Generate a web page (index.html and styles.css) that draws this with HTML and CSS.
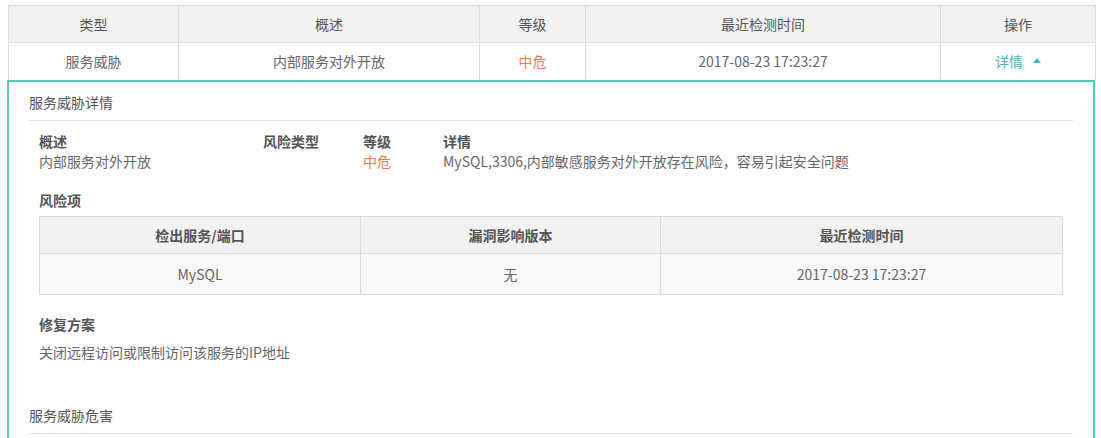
FILE: index.html
```html
<!DOCTYPE html>
<html lang="zh-CN">
<head>
<meta charset="utf-8">
<link rel="stylesheet" href="styles.css">
</head>
<body>
<div class="page">
  <table class="main-table">
    <colgroup>
      <col class="c1"><col class="c2"><col class="c3"><col class="c4"><col class="c5">
    </colgroup>
    <thead>
      <tr><th>类型</th><th>概述</th><th>等级</th><th>最近检测时间</th><th>操作</th></tr>
    </thead>
    <tbody>
      <tr>
        <td>服务威胁</td>
        <td>内部服务对外开放</td>
        <td class="level">中危</td>
        <td>2017-08-23 17:23:27</td>
        <td><span class="link">详情<span class="caret"></span></span></td>
      </tr>
    </tbody>
  </table>
  <div class="detail">
    <div class="section-title">服务威胁详情</div>
    <div class="section-body">
      <div class="info">
        <div class="label">概述</div>
        <div class="label">风险类型</div>
        <div class="label">等级</div>
        <div class="label">详情</div>
        <div class="value">内部服务对外开放</div>
        <div class="value"></div>
        <div class="value level">中危</div>
        <div class="value">MySQL,3306,内部敏感服务对外开放存在风险，容易引起安全问题</div>
      </div>
      <div class="label sub-head">风险项</div>
      <table class="risk-table">
        <colgroup><col class="r1"><col class="r2"><col class="r3"></colgroup>
        <thead><tr><th>检出服务/端口</th><th>漏洞影响版本</th><th>最近检测时间</th></tr></thead>
        <tbody><tr><td>MySQL</td><td>无</td><td>2017-08-23 17:23:27</td></tr></tbody>
      </table>
      <div class="label fix-head">修复方案</div>
      <div class="fix-text">关闭远程访问或限制访问该服务的IP地址</div>
    </div>
    <div class="section-title second">服务威胁危害</div>
  </div>
</div>
</body>
</html>
```
FILE: styles.css
```css
* { box-sizing: border-box; }
html, body { margin: 0; padding: 0; background: #fff; }
body {
  font-family: "Noto Sans CJK SC", "Noto Sans", sans-serif;
  font-size: 14px;
  color: #666;
}
.page { padding: 5px 6px 0 7px; }
.main-table {
  border-collapse: collapse;
  table-layout: fixed;
  margin-left: 1px;
  width: 1087px;
}
.c1 { width: 170px; } .c2 { width: 301px; } .c3 { width: 106px; } .c4 { width: 355px; } .c5 { width: 155px; }
.main-table th, .main-table td {
  border: 1px solid #dcdcdc;
  text-align: center;
  height: 37px;
  padding: 0;
  font-weight: normal;
  line-height: 20px;
}
.main-table th { background: #f2f2f2; color: #555; }
.main-table td { color: #666; border-bottom: none; }
.level { color: #f07b4a; }
.main-table td.level { color: #f07b4a; }
.link { color: #45bab5; display: inline-flex; align-items: center; }
.caret {
  width: 0; height: 0;
  border-left: 4px solid transparent;
  border-right: 4px solid transparent;
  border-bottom: 5px solid #45bab5;
  margin-left: 10px;
  margin-top: -1px;
}
.detail {
  border: 2px solid #5cc5c0;
  border-bottom: none;
  width: 1088px;
  padding: 0 20px 0 20px;
  height: 360px;
}
.section-title {
  color: #555;
  line-height: 20px;
  padding: 10px 0 8px;
  border-bottom: 1px solid #e3e3e3;
}
.section-title.second { padding-top: 43px; }
.section-body { padding-left: 10px; padding-right: 10px; }
.info {
  display: grid;
  grid-template-columns: 224px 100px 80px 1fr;
  padding-top: 10px;
  line-height: 20px;
}
.label { color: #555; font-weight: bold; line-height: 20px; }
.value { color: #666; }
.value.level { color: #f07b4a; }
.sub-head { margin-top: 19px; }
.risk-table {
  margin-top: 6px;
  width: 1023px;
  border-collapse: collapse;
  table-layout: fixed;
}
.r1 { width: 321px; } .r2 { width: 300px; } .r3 { width: 402px; }
.risk-table th, .risk-table td {
  border: 1px solid #dcdcdc;
  text-align: center;
  padding: 0;
  line-height: 20px;
}
.risk-table th { background: #f2f2f2; color: #555; font-weight: bold; height: 37px; }
.risk-table td { background: #f8f8f8; color: #666; height: 41px; }
.fix-head { margin-top: 19px; }
.fix-text { margin-top: 8px; line-height: 20px; color: #666; }
```
